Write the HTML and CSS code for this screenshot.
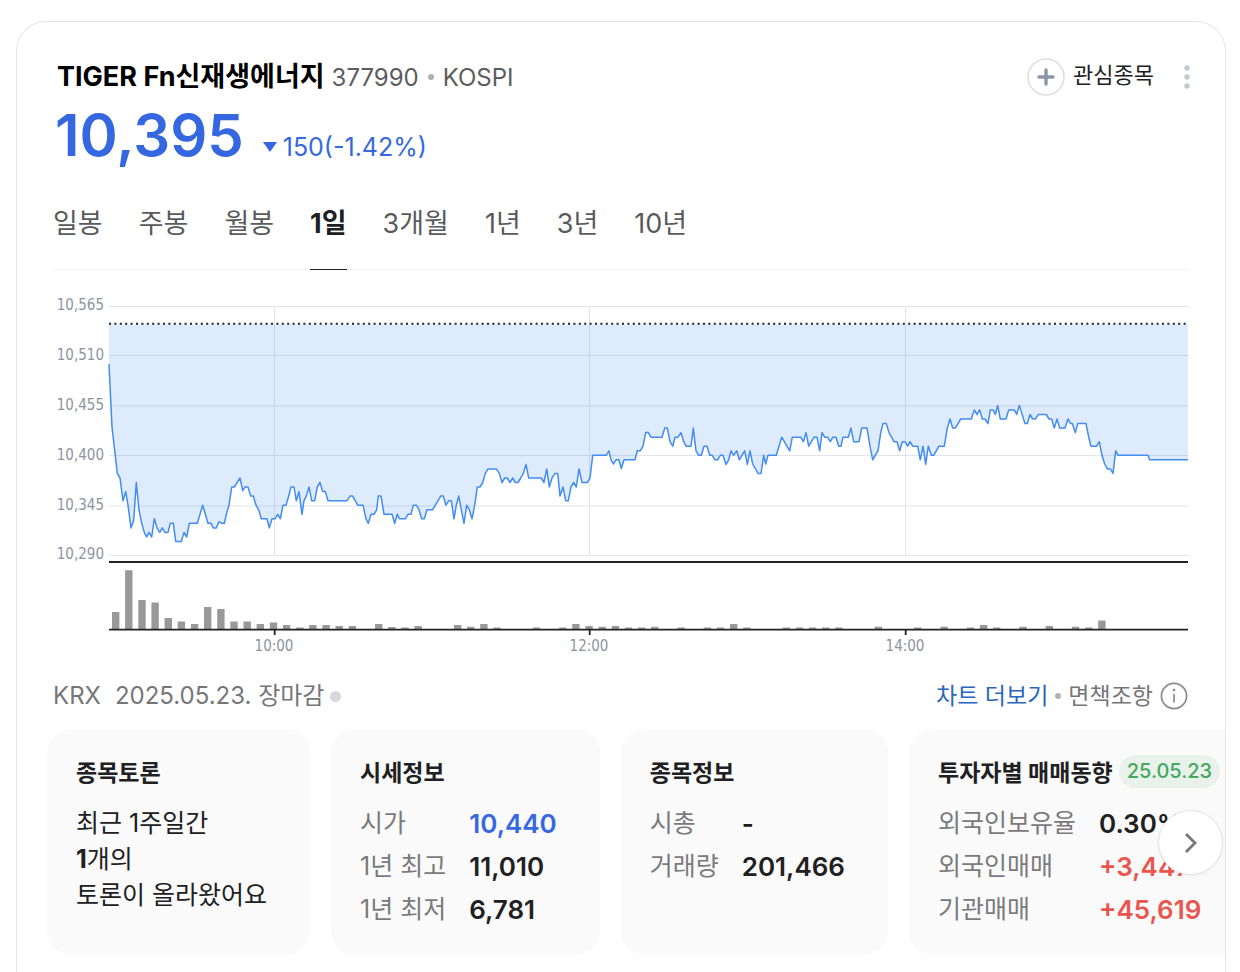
FILE: index.html
```html
<!DOCTYPE html>
<html lang="ko">

<head>
    <meta charset="UTF-8">
    <meta name="viewport" content="width=device-width, initial-scale=1.0">
    <title>TIGER Fn신재생에너지</title>
    <link rel="stylesheet" href="styles.css">
</head>

<body>

    <main class="stock">
        <!-- 종목 이름 -->
        <header class="stock-header">
            <div class="stock-name">
                <h1>TIGER Fn신재생에너지</h1>
                <span class="code">377990</span>
                <span class="dot"></span>
                <span class="code">KOSPI</span>
            </div>
            <div class="actions">
                <button class="favorite" type="button">
                    <svg width="38" height="38" viewBox="0 0 38 38" aria-hidden="true">
                        <circle cx="19" cy="19" r="18" fill="none" stroke="#dcdee4" stroke-width="1.6" />
                        <path d="M19 12v14M12 19h14" fill="none" stroke="#8b96a8" stroke-width="3.4" stroke-linecap="round" />
                    </svg>
                    <span>관심종목</span>
                </button>
                <button class="more" type="button" aria-label="더보기">
                    <svg width="6" height="24" viewBox="0 0 6 24" aria-hidden="true" fill="#c3c7d0">
                        <circle cx="3" cy="3" r="2.7" />
                        <circle cx="3" cy="12" r="2.7" />
                        <circle cx="3" cy="21" r="2.7" />
                    </svg>
                </button>
            </div>
        </header>

        <!-- 현재가 -->
        <div class="price-row">
            <strong class="price">10,395</strong>
            <span class="change">
                <svg width="14" height="10" viewBox="0 0 14 10" aria-hidden="true"><path d="M0 0h14L7 10z" fill="#3568e0" /></svg>
                150(-1.42%)
            </span>
        </div>

        <!-- 기간 탭 -->
        <nav class="tabs" role="tablist">
            <button role="tab" type="button">일봉</button>
            <button role="tab" type="button">주봉</button>
            <button role="tab" type="button">월봉</button>
            <button role="tab" type="button" class="active" aria-selected="true">1일</button>
            <button role="tab" type="button">3개월</button>
            <button role="tab" type="button">1년</button>
            <button role="tab" type="button">3년</button>
            <button role="tab" type="button">10년</button>
        </nav>

        <!-- 차트 -->
        <svg class="chart" viewBox="0 0 1135 370" role="img" aria-label="1일 차트">
            <g class="grid">
                <path d="M56 16.5H1135M56 65.5H1135M56 116H1135M56 165.5H1135M56 216H1135M56 265.5H1135" />
                <path d="M221.5 16V265M536.5 16V265M852.5 16V265" />
            </g>
            <g class="axis-text axis-price">
                <text x="51" y="20">10,565</text>
                <text x="51" y="70">10,510</text>
                <text x="51" y="120">10,455</text>
                <text x="51" y="170">10,400</text>
                <text x="51" y="220">10,345</text>
                <text x="51" y="269">10,290</text>
            </g>
            <path class="area" d="" />
            <path class="price-line" id="line" d="M56 74L57.7 110 59 137 61.3 157 64.3 183.4 67 188 70 210.7 72.7 201.6 75 215.2 78 237.9 80.7 230 83.3 192.5 86 219.7 88.7 233.3 91.3 242.4 93.7 247 96 242.4 98.7 247 101.3 228.8 104 237.9 106.7 242.4 109.3 237.9 112 242.4 115 242.4 117.3 233.3 120.3 233.3 122.7 251.5 128.3 251.5 131 242.4 133.7 247 136.3 233.3 144.3 233.3 149.7 215.2 155 233.3 158 233.3 160.3 237.9 163.3 237.9 166 231.7 168.7 233.3 171.3 233.3 173.7 223 176 215.2 178.7 197 181.3 197 187 188 189.7 200.7 192 197 195 197 197.7 206.1 200.3 206.1 203 215.2 205.7 220 208.3 228.8 214 228.8 216.3 237.9 219 228.8 222 228.8 224.7 224.3 227.3 228.8 230 215.2 233 215.2 235.3 207.5 238 197 241 197 243.3 210.7 246 201.6 249 224.3 251 210.7 253.3 206.1 256 197 258.7 210.7 261.7 210.7 264.3 197 267 192.5 269.7 201.6 272.3 201.6 275 210.7 294 210.7 297 206.1 299.7 206.1 304.7 215.2 310 215.2 313 228.8 315.3 233.3 318 224.3 321 224.3 323.7 219.7 325.3 206.1 328 206.1 331 224.3 339 224.3 341.7 233.3 344.3 224.3 346.7 228.8 352.3 228.8 355 224.3 358 224.3 360.3 215.2 363.3 215.2 366 219.7 368.7 228.8 371.3 228.8 374 219.7 379.7 219.7 387.7 206.1 390.3 206.1 393 215.2 395.7 210.7 398.3 210.7 401 228.8 403.3 215.2 405.7 206.1 408.3 219.7 411 233.3 413.7 215.2 416.3 219.7 419 228.8 421.7 215.2 424.3 197 427 197 429.7 192.5 432.3 183.4 435 178.9 443.3 178.9 446.3 183.4 449 192.5 451.7 188 454.3 188 457 192.5 459.7 188 462.3 192.5 465 192.5 467.7 188 470.3 183.4 473 174.4 475.7 188 488.3 188 491 192.5 493.7 178.9 496.3 197 499 188 502 183.4 504.7 183.4 507 206.1 510 197 512.7 210.7 515.3 210.7 518 197 520.7 192.5 523.3 197 526 178.9 529 192.5 534.3 192.5 537 188 539.7 165.3 553.3 165.3 556 160.8 558 169.8 560.3 174 563 169.8 566 169.8 568.3 178.5 571 169.8 582 169.8 584.3 160.8 587.3 160.8 590 156.2 592.7 142.6 595.3 142.6 598 147.2 609 147.2 611.7 138.1 614.3 138.1 617 151.7 619.7 156.2 622 147.2 625 147.2 628 142.6 630.7 151.7 633 156.2 638 156.2 640.3 138.1 643 160.8 645.7 165.3 648.3 165.3 651 156.2 654 156.2 656.7 165.3 659.3 165.3 662 169.8 664.7 169.8 667.3 165.3 670 165.3 673 174.4 675.7 169.8 678 160.8 680.7 165.3 683.7 160.8 686.3 169.8 691.7 160.8 694.3 174.4 697 160.8 699.7 174 705 183.4 708 183.4 710.7 165.3 712.7 174 715 165.3 723.3 165.3 728.7 147.2 736.7 160.8 739.3 147.2 747.7 147.2 750.3 151.7 753 142.6 755.7 156.2 761 147.2 764 147.2 766.7 160.8 769 142.6 771.7 147.2 774.7 147.2 777.3 151.7 780 147.2 783 147.2 785.7 156.2 788 156.2 790 147.2 795.3 147.2 798 138.1 800.7 151.7 806 151.7 808.7 138.1 814 138.1 817 156.2 819.7 169.8 825 160.8 827.7 142.6 830 133.6 833.3 133.6 836 142.6 841 151.7 844 151.7 846.7 160.8 849.3 151.7 852 151.7 854.7 156.2 857 151.7 859.7 156.2 864.7 156.2 867.3 169.8 870 156.2 872.7 174.4 875.3 156.2 878.3 165.3 880.7 165.3 886 156.2 891.3 156.2 894.3 138.1 897 129 899.7 138.1 902.3 138.1 907.7 129 918.3 129 921.3 119.9 924 124.5 926.7 119.9 929.3 129 932 129 935 133.6 937.3 119.9 940.3 119.9 942.3 124.5 944.7 115.4 947.3 129 953 129 955.7 119.9 961.3 119.9 963.7 124.5 966.3 115.4 972 133.6 974.3 133.6 977 124.5 979.7 129 982.3 129 985.3 124.5 993.3 124.5 996 129 998.7 129 1001.3 138.1 1004 129 1006.7 138.1 1012 138.1 1015 129 1017.7 133.6 1019.3 133.6 1022.3 142.6 1024.7 133.6 1033 133.6 1035.7 147.2 1038 156.2 1043.7 156.2 1046.3 151.7 1049 165.3 1051.7 174 1054.3 178.9 1057.3 178.9 1060 183.4 1062.7 160.8 1065 165.3 1095 165.3 1096.7 169.8 1135 169.8" />
            <path class="base-line" d="M56 33.7H1135" />

            <!-- 거래량 -->
            <path class="volume" d="M62.7 339v-17M75.8 339v-58.7M89 339v-29M102.1 339v-26.5M115.3 339v-11M128.4 339v-7.5M141.6 339v-5M154.7 339v-22M167.9 339v-20M181 339v-7.5M194.2 339v-7.5M207.3 339v-5M220.5 339v-6.5M233.6 339v-4M246.8 339v-1.4M259.9 339v-4M273.1 339v-4M286.2 339v-3M299.4 339v-3M325.7 339v-5M338.8 339v-2M352 339v-1.4M365.1 339v-3M404.6 339v-4M417.7 339v-2.2M430.9 339v-5M444 339v-1.4M483.5 339v-1.4M509.8 339v-1.4M522.9 339v-5M536.1 339v-3M549.2 339v-2.2M562.4 339v-3M575.5 339v-1.4M588.7 339v-1.4M601.8 339v-2.2M628.1 339v-1.4M654.4 339v-1.4M667.6 339v-1.4M680.7 339v-5M693.9 339v-1.4M733.3 339v-1.4M746.5 339v-1.4M759.6 339v-1.4M772.8 339v-1.4M785.9 339v-1.4M825.4 339v-2.2M864.8 339v-1.4M891.1 339v-2.2M917.4 339v-1.4M930.6 339v-4M943.7 339v-1.4M970 339v-2.2M996.3 339v-3M1022.6 339v-2.2M1035.8 339v-1.4M1048.9 339v-8.5" />
            <path class="axis" d="M56 272H1135M56 339.7H1135M221.7 340v5M536.7 340v5M852.7 340v5" />
            <g class="axis-text axis-time">
                <text x="221" y="361">10:00</text>
                <text x="536" y="361">12:00</text>
                <text x="852" y="361">14:00</text>
            </g>
        </svg>

        <div class="chart-info">
            <div class="market">
                <span>KRX</span>
                <span>2025.05.23. 장마감</span>
                <span class="status-dot"></span>
            </div>
            <div class="links">
                <a class="chart-more" href="#">차트 더보기</a>
                <span class="dot"></span>
                <a class="disclaimer" href="#">면책조항
                    <svg width="28" height="28" viewBox="0 0 28 28" aria-hidden="true">
                        <circle cx="14" cy="14" r="12.6" fill="none" stroke="#8a8a8a" stroke-width="1.7" />
                        <path d="M14 12v8.5" stroke="#8a8a8a" stroke-width="1.7" />
                        <circle cx="14" cy="8" r="1.3" fill="#8a8a8a" />
                    </svg>
                </a>
            </div>
        </div>

        <!-- 정보 카드 -->
        <div class="carousel">
            <div class="cards">
                <section class="card">
                    <h2>종목토론</h2>
                    <p>최근 1주일간<br><b>1</b>개의<br>토론이 올라왔어요</p>
                </section>
                <section class="card">
                    <h2>시세정보</h2>
                    <table>
                        <tr><th scope="row">시가</th><td class="down">10,440</td></tr>
                        <tr><th scope="row">1년 최고</th><td>11,010</td></tr>
                        <tr><th scope="row">1년 최저</th><td>6,781</td></tr>
                    </table>
                </section>
                <section class="card">
                    <h2>종목정보</h2>
                    <table>
                        <tr><th scope="row">시총</th><td>-</td></tr>
                        <tr><th scope="row">거래량</th><td>201,466</td></tr>
                    </table>
                </section>
                <section class="card">
                    <h2>투자자별 매매동향 <span class="date">25.05.23</span></h2>
                    <table>
                        <tr><th scope="row">외국인보유율</th><td>0.30%</td></tr>
                        <tr><th scope="row">외국인매매</th><td class="up">+3,447</td></tr>
                        <tr><th scope="row">기관매매</th><td class="up">+45,619</td></tr>
                    </table>
                </section>
            </div>
            <button class="next" type="button" aria-label="다음">
                <svg width="14" height="22" viewBox="0 0 14 22" aria-hidden="true">
                    <path d="M2 2l9 9-9 9" fill="none" stroke="#777" stroke-width="2.8" />
                </svg>
            </button>
        </div>
    </main>

    <script>
        // 기준선과 가격선 사이를 채우기
        const line = document.getElementById('line').getAttribute('d');
        document.querySelector('.area').setAttribute('d', line + 'V34H56Z');
    </script>

</body>

</html>
```
FILE: styles.css
```css
* {
    box-sizing: border-box;
}

body {
    margin: 0;
    padding: 21px 14px 0 16px;
    min-height: 100vh;
    display: flex;
    background-color: #fff;
    color: #202022;
    font-family: Inter, "Noto Sans CJK KR", sans-serif;
}

h1,
h2,
p {
    margin: 0;
}

button {
    padding: 0;
    border: none;
    background: none;
    color: inherit;
    font: inherit;
    cursor: pointer;
}

a {
    text-decoration: none;
}

svg {
    flex-shrink: 0;
}

.stock {
    flex: 1;
    min-width: 0;
    padding: 36px 0 16px 36px;
    border: 1px solid #e6e6e8;
    border-bottom: none;
    border-radius: 30px 30px 0 0;
    overflow: hidden;
}
/* 상단 */

.stock-header {
    display: flex;
    justify-content: space-between;
    align-items: center;
    margin-right: 35px;
    height: 38px;
}

.stock-name {
    display: flex;
    align-items: baseline;
    gap: 7px;
    padding-left: 4px;
    line-height: 38px;
    white-space: nowrap;
}

.stock-name h1 {
    color: #000;
    font-size: 27px;
    font-weight: 700;
}

.code {
    color: #5c5c5e;
    font-size: 24px;
}

.dot {
    align-self: center;
    width: 6px;
    height: 6px;
    margin: 0 2px;
    border-radius: 50%;
    background-color: #b0b0b2;
}

.actions,
.favorite {
    display: flex;
    align-items: center;
}

.favorite {
    gap: 8px;
    font-size: 22px;
    line-height: 34px;
}

.favorite span {
    padding-bottom: 4px;
}

.more {
    display: flex;
    margin-left: 30px;
}
/* 가격 */

.price-row {
    display: flex;
    align-items: baseline;
    gap: 19px;
    margin-top: 5px;
    padding-left: 2px;
    color: #3568e0;
    line-height: 68px;
}

.price {
    font-size: 58px;
    font-weight: 600;
}

.change {
    display: flex;
    align-items: baseline;
    gap: 6px;
    font-size: 25px;
    line-height: 36px;
}

.change svg {
    align-self: center;
}
/* 탭 */

.tabs {
    display: flex;
    gap: 36px;
    margin: 37px 37px 0 0;
    border-bottom: 1px solid #f3f3f4;
    color: #5a5a5c;
    font-size: 27px;
    line-height: 36px;
    white-space: nowrap;
}

.tabs button {
    margin-bottom: -1px;
    padding-bottom: 27px;
    border-bottom: 1px solid transparent;
}

.tabs .active {
    border-bottom-color: #202022;
    color: #202022;
    font-weight: 700;
}
/* 차트 */

.chart {
    display: block;
    width: calc(100% - 37px);
    margin-top: 20px;
}

.grid path {
    fill: none;
    stroke: #e2e4e9;
}

.axis-text {
    fill: #8d94a0;
    font-family: "DejaVu Sans Condensed", "DejaVu Sans", sans-serif;
    font-size: 15px;
}

.axis-price {
    text-anchor: end;
}

.axis-time {
    text-anchor: middle;
}

.area {
    fill: #2f80ed;
    fill-opacity: 0.16;
}

.price-line {
    fill: none;
    stroke: #438cf2;
    stroke-width: 1.5;
    stroke-linejoin: round;
}

.base-line {
    stroke: #222;
    stroke-width: 2;
    stroke-dasharray: 2 3.4;
}

.volume {
    stroke: #999;
    stroke-width: 7.4;
}

.axis {
    stroke: #222;
    stroke-width: 1.8;
}
/* 차트 하단 */

.chart-info {
    display: flex;
    justify-content: space-between;
    margin: 18px 37px 0 0;
    color: #767678;
    font-size: 23px;
    line-height: 36px;
    white-space: nowrap;
}

.market,
.links,
.disclaimer {
    display: flex;
    align-items: center;
}

.market {
    font-size: 24px;
}

.market span + span {
    margin-left: 14px;
}

.market .status-dot {
    width: 11px;
    height: 11px;
    margin-left: 6px;
    border-radius: 50%;
    background-color: #d8d8da;
}

.links {
    gap: 5px;
}

.chart-more {
    color: #2866c0;
}

.disclaimer {
    gap: 7px;
    color: inherit;
}
/* 카드 */

.carousel {
    position: relative;
    margin: 15px 0 0 -6px;
}

.cards {
    display: flex;
    gap: 21px;
    overflow: hidden;
}

.card {
    flex-shrink: 0;
    min-height: 226px;
    padding: 24px 43px 24px 29px;
    border-radius: 24px;
    background-color: #fafafa;
    white-space: nowrap;
}

.card h2 {
    display: flex;
    align-items: center;
    gap: 6px;
    height: 36px;
    font-size: 23px;
    font-weight: 700;
}

.date {
    padding: 0 8px;
    border-radius: 17px;
    background-color: #e8f2ea;
    color: #46a860;
    font-size: 20px;
    font-weight: 500;
    line-height: 33px;
}

.card p {
    margin-top: 16px;
    font-size: 25px;
    line-height: 36px;
}

.card table {
    margin-top: 13px;
    border-collapse: collapse;
}

.card th,
.card td {
    height: 43px;
    padding: 0;
    line-height: 43px;
}

.card th {
    padding-right: 23px;
    color: #7a7a7c;
    font-size: 25px;
    font-weight: 400;
    text-align: left;
}

.card td {
    font-size: 26px;
    font-weight: 600;
}

.card .down {
    color: #3568e0;
}

.card .up {
    color: #ea5550;
}

.next {
    position: absolute;
    top: 50%;
    right: 2px;
    display: flex;
    align-items: center;
    justify-content: center;
    width: 65px;
    height: 65px;
    margin-top: -32px;
    border: 1px solid #e4e4e8;
    border-radius: 50%;
    background-color: #fff;
    box-shadow: 0 1px 3px rgba(0, 0, 0, 0.06);
}
```
